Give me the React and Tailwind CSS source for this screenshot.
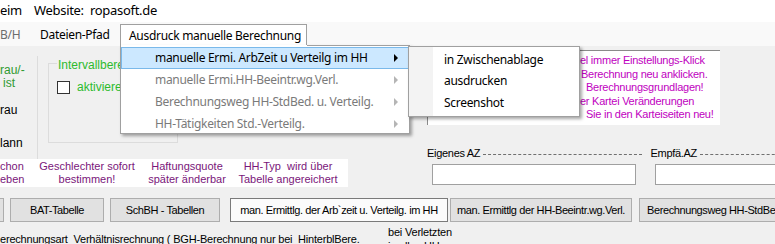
const ui = "font-['Noto_Sans',sans-serif] tracking-[-0.3px]";

function Arrow({ dim }) {
  return (
    <span
      className={`w-0 h-0 border-y-[4px] border-y-transparent border-l-[4px] ${
        dim ? "border-l-[#b5b5b5]" : "border-l-black"
      }`}
    />
  );
}

function MenuItem({ label, active, dim }) {
  return (
    <div
      className={`h-[22px] flex items-center justify-between pl-[33px] pr-[10px] border whitespace-nowrap ${
        active ? "bg-[#cce8ff] border-[#7ab9ea]" : "border-transparent"
      } ${dim ? "text-[#7a7a7a]" : "text-black"}`}
    >
      <span>{label}</span>
      <Arrow dim={dim} />
    </div>
  );
}

function Btn({ children, w, focused }) {
  return (
    <div
      className={`h-[24px] shrink-0 flex items-center justify-center whitespace-nowrap overflow-hidden border ${
        focused
          ? "bg-[#fbfbfb] border-[#7a7a7a]"
          : "bg-[#e1e1e1] border-[#adadad]"
      } ${w}`}
    >
      {children}
    </div>
  );
}

export default function App() {
  return (
    <div className="relative w-[775px] h-[244px] overflow-hidden bg-[#f0f0f0] font-['Liberation_Sans',sans-serif] text-[11px] text-black">
      {/* title strip */}
      <div className={`h-[22px] bg-white flex items-center gap-[12px] text-[13px] whitespace-nowrap ${ui}`}>
        <span>eim</span>
        <span>Website:&nbsp; ropasoft.de</span>
      </div>

      {/* menu strip */}
      <div className={`h-[24px] bg-[#f9f9f9] flex items-end text-[12px] whitespace-nowrap ${ui}`}>
        <span className="w-[40px] h-[22px] flex items-center text-[#6d6d6d]">B/H</span>
        <span className="w-[80px] h-[22px] flex items-center">Dateien-Pfad</span>
        <span className="w-[187px] h-[22px] flex items-center pl-[8px] bg-white border border-b-0 border-[#a0a0a0]">
          Ausdruck manuelle Berechnung
        </span>
      </div>

      {/* body */}
      <div className="flex h-[144px]">
        {/* left part */}
        <div className="w-[420px] shrink-0 flex flex-col">
          <div className="h-[113px] flex">
            <div className="w-[38px] mt-[10px] border-r border-[#dcdcdc] flex flex-col leading-[13px] text-[12px]">
              <span className="mt-[8px] text-[#2f9a2f]">rau/-</span>
              <span className="text-[#2f9a2f] pl-[3px]">ist</span>
              <span className="mt-[14px]">rau</span>
              <span className="mt-[20px]">lann</span>
            </div>
            <div className="ml-[10px] mt-[17px] w-[130px] h-[80px] border border-[#dcdcdc] relative">
              <span className="absolute -top-[8px] left-[8px] bg-[#f0f0f0] px-[1px] text-[12px] text-[#2dbb2d] whitespace-nowrap">
                Intervallberechnung
              </span>
              <div className="mt-[14px] ml-[8px] flex items-center gap-[7px]">
                <span className="w-[13px] h-[13px] bg-white border border-[#333]" />
                <span className="text-[12px] text-[#2dbb2d]">aktivieren</span>
              </div>
            </div>
          </div>
          <div className="w-[348px] h-[28px] bg-white flex text-[#7a167a] leading-[13px] text-center items-center whitespace-nowrap">
            <div className="w-[28px] text-left">chon<br />eben</div>
            <div className="w-[118px]">Geschlechter sofort<br />bestimmen!</div>
            <div className="w-[82px]">Haftungsquote<br />später änderbar</div>
            <div className="w-[120px]">HH-Typ&nbsp; wird über<br />Tabelle angereichert</div>
          </div>
        </div>

        {/* right part */}
        <div className="flex-1 flex flex-col">
          <div className="ml-[7px] mt-[4px] w-[293px] h-[75px] bg-white border-l border-t border-[#8a8a8a] text-[#c000c0] leading-[13.5px] pt-[3px] whitespace-nowrap tracking-[-0.25px]">
            <div className="pl-[152px]">el immer Einstellungs-Klick</div>
            <div className="pl-[153px]">Berechnung neu anklicken.</div>
            <div className="pl-[158px]">Berechnungsgrundlagen!</div>
            <div className="pl-[152px]">er Kartei Veränderungen</div>
            <div className="pl-[158px]">Sie in den Karteiseiten neu!</div>
          </div>
          <div className="mt-[21px] ml-[7px] h-[14px] flex items-center gap-[3px] tracking-[-0.3px] whitespace-nowrap">
            <span>Eigenes AZ</span>
            <span className="flex-1 border-t border-dashed border-[#707070] mt-[2px]" />
            <span className="ml-[5px]">Empfä.AZ</span>
            <span className="w-[85px] shrink-0 border-t border-dashed border-[#707070] mt-[2px]" />
          </div>
          <div className="mt-[4px] flex">
            <span className="ml-[12px] w-[204px] h-[21px] bg-white border border-[#a0a0a0]" />
            <span className="ml-[19px] w-[130px] h-[21px] shrink-0 bg-white border border-[#a0a0a0]" />
          </div>
        </div>
      </div>

      {/* button row */}
      <div className="mt-[8px] flex tracking-[-0.4px]">
        <Btn w="w-[4px] border-l-0" />
        <div className="w-[6px] shrink-0" />
        <Btn w="w-[94px]">BAT-Tabelle</Btn>
        <div className="w-[6px] shrink-0" />
        <Btn w="w-[110px]">SchBH - Tabellen</Btn>
        <div className="w-[10px] shrink-0" />
        <Btn w="w-[218px]" focused>man. Ermittlg. der Arb`zeit u. Verteilg. im HH</Btn>
        <div className="w-[2px] shrink-0" />
        <Btn w="w-[182px]">man. Ermittlg der HH-Beeintr.wg.Verl.</Btn>
        <div className="w-[7px] shrink-0" />
        <Btn w="w-[160px] justify-start pl-[7px]">Berechnungsweg HH-StdBedarf</Btn>
      </div>

      {/* bottom text */}
      <div className="mt-[3px] flex leading-[14px] whitespace-nowrap tracking-[-0.2px]">
        <span className="w-[388px] shrink-0 mt-[7px] whitespace-pre">erechnungsart  Verhältnisrechnung ( BGH-Berechnung nur bei  HinterblBere.</span>
        <span>bei Verletzten<br />in allen HH</span>
      </div>

      {/* dropdown */}
      <div className={`absolute left-[120px] top-[45px] w-[290px] h-[89px] bg-white border border-[#a0a0a0] shadow-[2px_2px_3px_rgba(0,0,0,0.35)] text-[12px] pt-[1px] ${ui}`}>
        <div className="absolute -top-[1px] left-0 w-[186px] h-[1px] bg-white" />
        <MenuItem label="manuelle Ermi. ArbZeit u Verteilg im HH" active />
        <MenuItem label="manuelle Ermi.HH-Beeintr.wg.Verl." dim />
        <MenuItem label="Berechnungsweg HH-StdBed. u. Verteilg." dim />
        <MenuItem label="HH-Tätigkeiten Std.-Verteilg." dim />
      </div>

      {/* submenu */}
      <div className={`absolute left-[408px] top-[46px] w-[172px] h-[71px] bg-white border border-[#a0a0a0] shadow-[2px_2px_3px_rgba(0,0,0,0.35)] text-[12px] flex whitespace-nowrap ${ui}`}>
        <div className="w-[24px] bg-[#f3f3f3]" />
        <div className="flex flex-col pt-[2px] pl-[11px]">
          <span className="h-[21px] flex items-center">in Zwischenablage</span>
          <span className="h-[22px] flex items-center">ausdrucken</span>
          <span className="h-[22px] flex items-center">Screenshot</span>
        </div>
      </div>
    </div>
  );
}
